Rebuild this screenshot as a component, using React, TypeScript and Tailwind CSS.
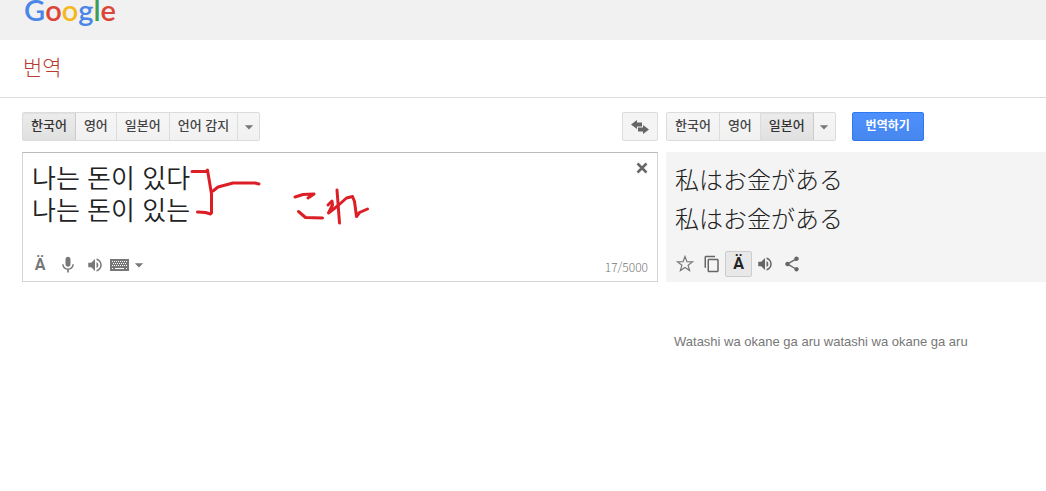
import React, { useState } from 'react';
import {
  MdArrowDropDown,
  MdContentCopy,
  MdMic,
  MdShare,
  MdVolumeUp,
} from 'react-icons/md';
import clsx from 'clsx';

const LOGO_LETTERS = [
  { char: 'G', color: 'text-[#4a86e8]' },
  { char: 'o', color: 'text-[#db4437]' },
  { char: 'o', color: 'text-[#f4b81c]' },
  { char: 'g', color: 'text-[#4a86e8]' },
  { char: 'l', color: 'text-[#3a9d58]' },
  { char: 'e', color: 'text-[#db4437]' },
];

interface LanguageTabsProps {
  languages: string[];
  selected: string;
  onSelect: (language: string) => void;
  menuLabel: string;
}

const LanguageTabs: React.FC<LanguageTabsProps> = ({ languages, selected, onSelect, menuLabel }) => (
  <div className="flex h-[29px] rounded-xs border border-[#dcdcdc] bg-linear-to-b from-[#f6f6f6] to-[#f1f1f1]">
    {languages.map((language) => (
      <button
        key={language}
        type="button"
        aria-pressed={language === selected}
        onClick={() => onSelect(language)}
        className={clsx(
          'border-r px-2 pb-1 text-[13px] leading-5 font-medium whitespace-nowrap',
          language === selected
            ? 'border-[#cccccc] bg-linear-to-b from-[#ececec] to-[#e0e0e0] text-[#333333] inset-shadow-xs'
            : 'border-[#dcdcdc] text-[#444444]'
        )}
      >
        {language}
      </button>
    ))}
    <button type="button" aria-label={menuLabel} className="flex w-[21px] items-center justify-center text-[#777777]">
      <MdArrowDropDown className="size-5 shrink-0" />
    </button>
  </div>
);

const SwapIcon = () => (
  <svg viewBox="0 0 18 16" className="h-4 w-[18px]" fill="currentColor" aria-hidden="true">
    <path d="M0 5.500 6 1v2.500h5v4H6V10z" />
    <path d="M18 10.500 12 6v2.500H7v4h5V15z" />
  </svg>
);

const CloseIcon = () => (
  <svg viewBox="0 0 12 12" className="size-3" stroke="currentColor" strokeWidth="2.500" aria-hidden="true">
    <path d="M1.500 1.500l9 9M10.500 1.500l-9 9" />
  </svg>
);

const StarIcon = () => (
  <svg viewBox="0 0 20 20" className="size-5" fill="none" stroke="currentColor" strokeWidth="1.200" aria-hidden="true">
    <path d="M10 2.500l1.900 5.200 5.600.2-4.400 3.400 1.500 5.300L10 13.500l-4.600 3.100 1.500-5.300L2.500 7.900l5.600-.2z" />
  </svg>
);

const KeyboardIcon = () => (
  <svg viewBox="0 0 19 12" className="h-3 w-[19px]" aria-hidden="true">
    <rect width="19" height="12" fill="currentColor" />
    <g stroke="#ffffff" strokeDasharray="1 1">
      <path d="M2 2.5h15" />
      <path d="M3 4.5h14" />
      <path d="M2 6.5h15" />
    </g>
    <path d="M2 9.5h1M5 9.5h9M16 9.5h1" stroke="#ffffff" />
  </svg>
);

const PenMarks = () => (
  <svg
    viewBox="190 165 180 62"
    className="pointer-events-none absolute top-3 left-[167px] h-[62px] w-[180px]"
    fill="none"
    stroke="#dc1f26"
    strokeWidth="3"
    strokeLinecap="round"
    strokeLinejoin="round"
    aria-hidden="true"
  >
    <path d="M192 171.500h14l1.500-1.500 2 12 2 12v19l-1 1-5-1.500-8-.5" />
    <path d="M213 191l5-4 15-4h22l4 1" />
    <path d="M295 197l8-2.500 11-.5-6 4" />
    <path d="M298.500 211.500l7 6 17 .5" />
    <path d="M337 190l2.500 33" />
    <path d="M328 205l4-4 .5 4-4 8 9-7 9-8 6-1.500 2 5 2 15 3-4 8-3.500" />
  </svg>
);

export default function App() {
  const [source, setSource] = useState('한국어');
  const [target, setTarget] = useState('일본어');
  const [text, setText] = useState('나는 돈이 있다\n나는 돈이 있는');

  return (
    <div lang="ko" className="min-h-screen overflow-x-hidden bg-white font-['Noto_Sans_CJK_KR',sans-serif]">
      <header className="h-10 bg-[#f1f1f1] px-6">
        <a href="#" className="flex h-[18px] items-center font-['Lato',sans-serif] text-[29px] leading-none font-semibold">
          {LOGO_LETTERS.map((letter, index) => (
            <span key={index} className={letter.color}>{letter.char}</span>
          ))}
        </a>
      </header>

      <div className="flex h-[58px] items-center border-b border-[#dddddd] px-[23px]">
        <h1 className="pb-1 text-[21px] font-light text-[#b93a2e]">번역</h1>
      </div>

      <main className="grid grid-cols-[1fr_380px] gap-x-2 gap-y-[11px] pt-[14px] pl-[22px]">
        <div className="flex items-center justify-between">
          <LanguageTabs
            languages={['한국어', '영어', '일본어', '언어 감지']}
            selected={source}
            onSelect={setSource}
            menuLabel="출발어 더보기"
          />
          <button
            type="button"
            aria-label="언어 전환"
            className="flex h-[29px] w-9 items-center justify-center rounded-xs border border-[#dcdcdc] bg-[#f4f4f4] text-[#666666]"
          >
            <SwapIcon />
          </button>
        </div>

        <div className="flex items-center gap-4">
          <LanguageTabs
            languages={['한국어', '영어', '일본어']}
            selected={target}
            onSelect={setTarget}
            menuLabel="도착어 더보기"
          />
          <button
            type="button"
            className="h-[29px] w-[72px] rounded-xs border border-[#3079ed] bg-linear-to-b from-[#4d90fe] to-[#4787ed] pb-1 text-xs leading-5 font-bold text-white"
          >
            번역하기
          </button>
        </div>

        <section className="relative flex h-[130px] flex-col border border-[#d4d4d4] border-t-[#bbbbbb]">
          <textarea
            aria-label="원본 텍스트"
            rows={2}
            value={text}
            onChange={(e) => setText(e.target.value)}
            className="block w-full resize-none overflow-hidden pt-2 pr-10 pl-[9px] text-[26px] leading-8 font-[350] text-[#222222] outline-none"
          />
          <button type="button" aria-label="지우기" className="absolute top-[9px] right-[9px] text-[#666666]">
            <CloseIcon />
          </button>
          <PenMarks />
          <div className="mt-auto flex h-8 items-center pr-[9px] pl-[11px] text-[#777777]">
            <button type="button" aria-label="발음 표시" className="w-3 font-['Roboto',sans-serif] text-base leading-5 font-bold">Ä</button>
            <button type="button" aria-label="음성 입력" className="ml-3"><MdMic className="size-5" /></button>
            <button type="button" aria-label="듣기" className="ml-2"><MdVolumeUp className="size-[18px]" /></button>
            <button type="button" aria-label="입력 도구" className="ml-[6px]"><KeyboardIcon /></button>
            <button type="button" aria-label="입력 도구 선택"><MdArrowDropDown className="size-5" /></button>
            <span className="ml-auto pt-1 text-xs font-light text-[#777777]">17/5000</span>
          </div>
        </section>

        <section className="flex h-[130px] flex-col bg-[#f4f4f4]">
          <p lang="ja" className="pt-[7px] pl-[9px] font-['Noto_Sans_CJK_JP',sans-serif] text-2xl leading-[39px] font-light text-[#222222]">
            私はお金がある
            <br />
            私はお金がある
          </p>
          <div className="mt-auto flex h-9 items-center pl-[9px] text-[#666666]">
            <button type="button" aria-label="저장" className="text-[#777777]"><StarIcon /></button>
            <button type="button" aria-label="복사" className="ml-2"><MdContentCopy className="size-[18px]" /></button>
            <button
              type="button"
              aria-label="발음 표시"
              className="ml-1 h-[26px] w-[27px] rounded-xs border border-[#cccccc] bg-[#e8e8e8] font-['Roboto',sans-serif] text-base leading-5 font-bold text-[#222222]"
            >
              Ä
            </button>
            <button type="button" aria-label="듣기" className="ml-1"><MdVolumeUp className="size-[18px]" /></button>
            <button type="button" aria-label="공유" className="ml-[9px]"><MdShare className="size-[18px]" /></button>
          </div>
        </section>

        <p className="col-start-2 pt-[39px] pl-2 font-['Liberation_Sans',sans-serif] text-[13px] leading-5 text-[#777777]">
          Watashi wa okane ga aru watashi wa okane ga aru
        </p>
      </main>
    </div>
  );
}
